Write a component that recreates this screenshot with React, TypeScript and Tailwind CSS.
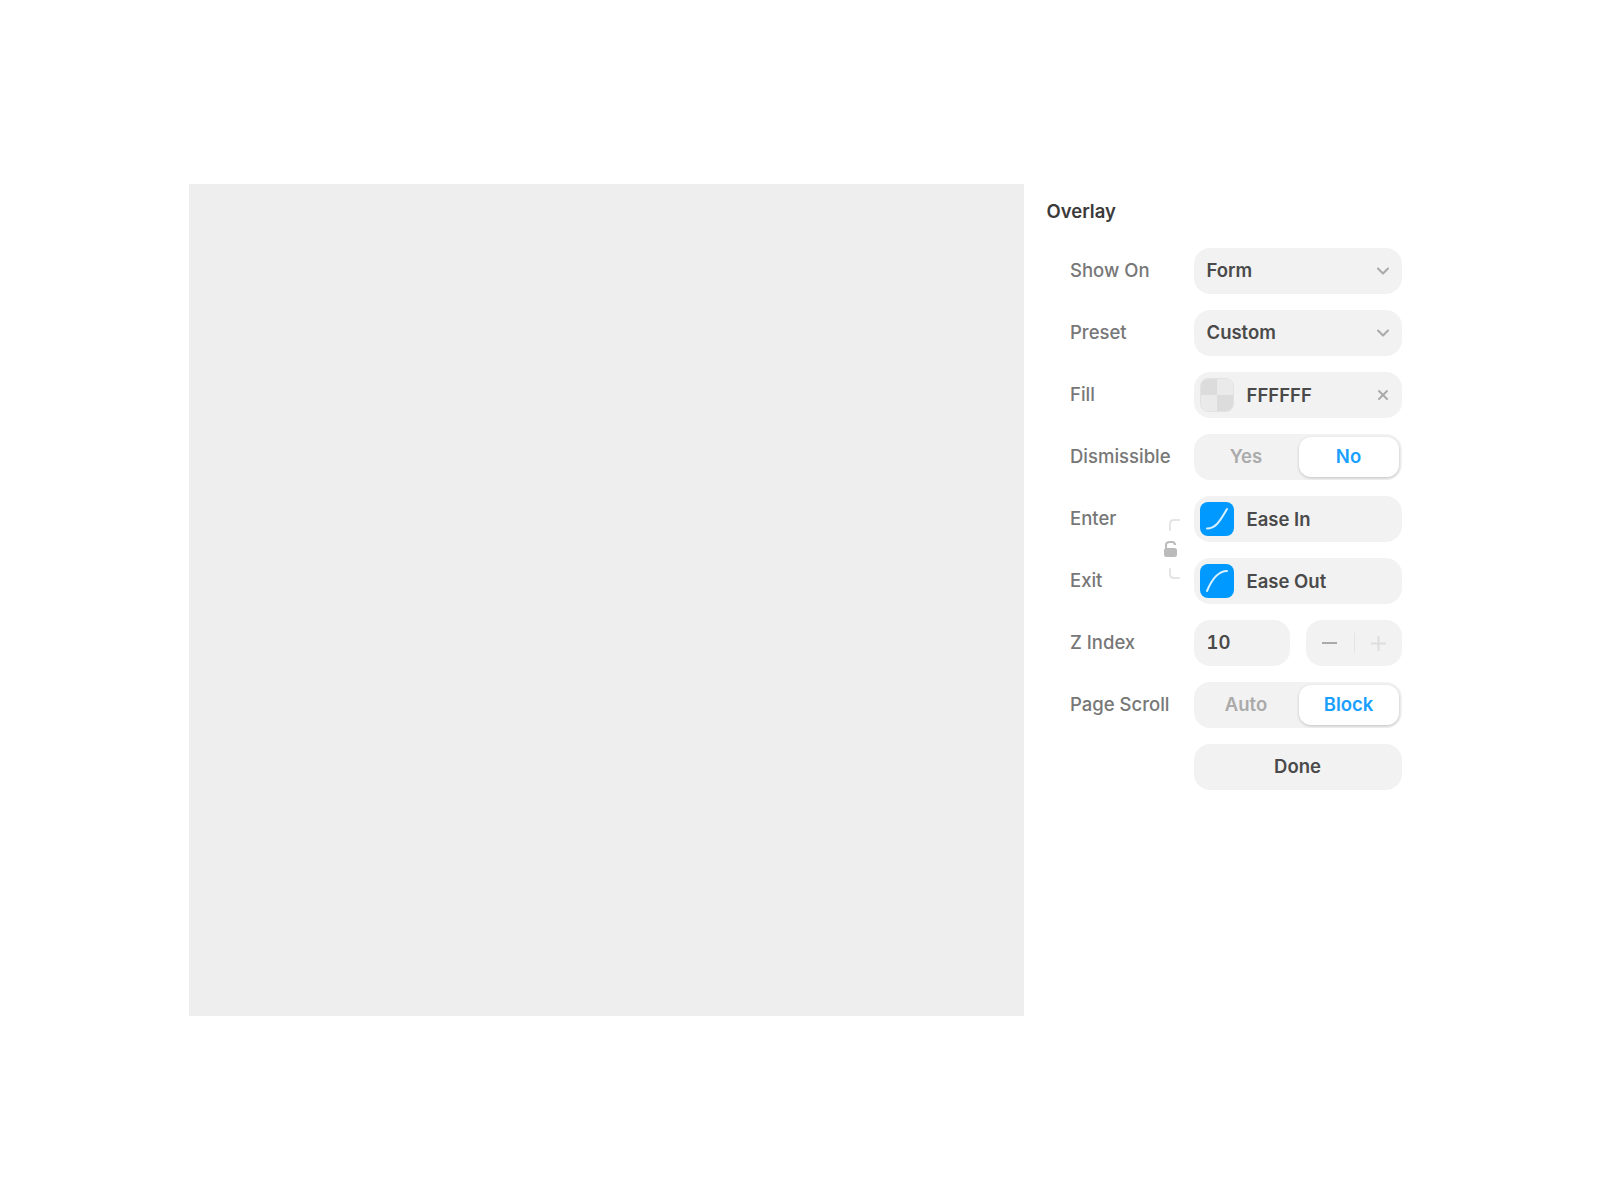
import { ChevronDown, X } from 'lucide-react'
import type { ReactNode } from 'react'

function Row({ label, children }: { label?: string; children: ReactNode }) {
  return (
    <div className="flex items-center h-[46px]">
      <span className="w-[147px] pl-[23.5px] text-[#777] font-medium text-[18.5px]">{label}</span>
      <div className="w-[208px]">{children}</div>
    </div>
  )
}

function SelectField({ value }: { value: string }) {
  return (
    <div className="h-[46px] rounded-2xl bg-[#f2f2f2] flex items-center justify-between pl-[13px] pr-[9px] font-semibold text-[18.5px] text-[#4a4a4a]">
      {value}
      <ChevronDown size={20} strokeWidth={2.5} className="text-[#aaa]" />
    </div>
  )
}

function Segmented({ off, on }: { off: string; on: string }) {
  return (
    <div className="h-[46px] rounded-2xl bg-[#f2f2f2] flex py-[3px] pr-[3px] font-semibold text-[18.5px]">
      <div className="flex-1 flex items-center justify-center text-[#aaa]">{off}</div>
      <div className="w-[100px] rounded-xl bg-white shadow-[0_1px_3px_rgba(0,0,0,0.2)] flex items-center justify-center text-[#1a9fff]">
        {on}
      </div>
    </div>
  )
}

function EaseField({ label, curve }: { label: string; curve: string }) {
  return (
    <div className="h-[46px] rounded-2xl bg-[#f2f2f2] flex items-center pl-1.5 gap-[13px] font-semibold text-[18.5px] text-[#4a4a4a]">
      <div className="w-[34px] h-[34px] rounded-lg bg-[#0099ff] flex items-center justify-center">
        <svg width="34" height="34" viewBox="0 0 34 34" fill="none">
          <path d={curve} stroke="#fff" strokeOpacity="0.85" strokeWidth="2" strokeLinecap="round" />
        </svg>
      </div>
      <span className="pt-px">{label}</span>
    </div>
  )
}

export default function App() {
  return (
    <div className="h-[1200px] bg-white flex items-center justify-center pr-[10px] font-['Inter',sans-serif]">
      <div className="flex items-start gap-[23px]">
        <div className="w-[835px] h-[832px] bg-[#eeeeee]" />
        <div className="flex flex-col gap-4">
          <h2 className="h-[15px] mb-[13px] mt-5 flex items-center text-[18.5px] font-semibold text-[#3a3a3a]">Overlay</h2>
          <Row label="Show On"><SelectField value="Form" /></Row>
          <Row label="Preset"><SelectField value="Custom" /></Row>
          <Row label="Fill">
            <div className="h-[46px] rounded-2xl bg-[#f2f2f2] flex items-center pl-1.5 pr-[11px] gap-[13px] font-semibold text-[18.5px] text-[#4a4a4a]">
              <div className="w-[34px] h-[34px] rounded-lg overflow-hidden grid grid-cols-2 grid-rows-2 border border-[#e2e2e2]">
                <div className="bg-[#dcdcdc]" />
                <div className="bg-[#eaeaea]" />
                <div className="bg-[#eaeaea]" />
                <div className="bg-[#dcdcdc]" />
              </div>
              <span className="flex-1 pt-px">FFFFFF</span>
              <X size={16} strokeWidth={3} className="text-[#aaa]" />
            </div>
          </Row>
          <Row label="Dismissible"><Segmented off="Yes" on="No" /></Row>
          <div className="relative flex flex-col gap-4">
            <Row label="Enter"><EaseField label="Ease In" curve="M7 26.5 C15 26.5 19 21 27 7" /></Row>
            <Row label="Exit"><EaseField label="Ease Out" curve="M7 27 C12 15 18 7 27 7" /></Row>
            {/* link bracket + lock between enter and exit */}
            <svg className="absolute left-[115px] top-[21px]" width="20" height="64" viewBox="0 0 20 64" fill="none">
              <path d="M17 3 H12 Q8 3 8 7 V13" stroke="#e4e4e4" strokeWidth="2" strokeLinecap="round" />
              <path d="M17 61 H12 Q8 61 8 57 V52" stroke="#e4e4e4" strokeWidth="2" strokeLinecap="round" />
              <path d="M4 32 V28 Q4 25 8 25 H10 Q13 25 13 28" stroke="#bbb" strokeWidth="2" />
              <rect x="2" y="31" width="13" height="9" rx="2.5" fill="#bbb" />
            </svg>
          </div>
          <Row label="Z Index">
            <div className="flex gap-4">
              <div className="w-[96px] h-[46px] rounded-2xl bg-[#f2f2f2] flex items-center pl-[13px] font-semibold text-[18.5px] tabular-nums text-[#4a4a4a]">10</div>
              <div className="w-[96px] h-[46px] rounded-2xl bg-[#f2f2f2]">
                <svg width="96" height="46" viewBox="0 0 96 46" fill="none">
                  <path d="M16 23 H31" stroke="#aaa" strokeWidth="2" />
                  <path d="M48.5 13 V33" stroke="#e4e4e4" strokeWidth="1" />
                  <path d="M65 23.5 H80 M72.5 16 V31" stroke="#ddd" strokeWidth="2" />
                </svg>
              </div>
            </div>
          </Row>
          <Row label="Page Scroll"><Segmented off="Auto" on="Block" /></Row>
          <Row>
            <div className="h-[46px] rounded-2xl bg-[#f2f2f2] flex items-center justify-center font-semibold text-[18.5px] text-[#4a4a4a]">Done</div>
          </Row>
        </div>
      </div>
    </div>
  )
}
